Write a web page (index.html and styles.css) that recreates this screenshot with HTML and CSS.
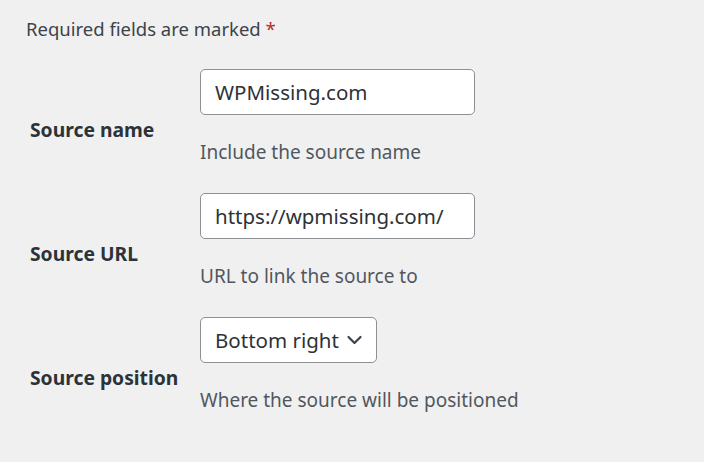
FILE: index.html
```html
<!DOCTYPE html>
<html lang="en">
<head>
<meta charset="utf-8">
<title>Source settings</title>
<link rel="stylesheet" href="styles.css">
</head>
<body>
<div class="page">
  <p class="required">Required fields are marked <span class="star">*</span></p>
  <div class="form">
    <div class="row">
      <label class="label" for="sn">Source name</label>
      <div class="field">
        <input class="input" id="sn" type="text" value="WPMissing.com">
        <p class="desc">Include the source name</p>
      </div>
    </div>
    <div class="row">
      <label class="label" for="su">Source URL</label>
      <div class="field">
        <input class="input" id="su" type="text" value="https://wpmissing.com/">
        <p class="desc">URL to link the source to</p>
      </div>
    </div>
    <div class="row">
      <label class="label" for="sp">Source position</label>
      <div class="field">
        <div class="select" id="sp">
          <span class="select-text">Bottom right</span>
          <svg class="chev" width="20" height="20" viewBox="0 0 20 20"><path d="M3.5 7 L9.5 13 L15.5 7" fill="none" stroke="#3c434a" stroke-width="2.2" stroke-linecap="round" stroke-linejoin="round"/></svg>
        </div>
        <p class="desc">Where the source will be positioned</p>
      </div>
    </div>
  </div>
</div>
</body>
</html>
```
FILE: styles.css
```css
html, body {
  margin: 0;
  padding: 0;
  background: #f0f0f1;
}
body {
  font-family: "Noto Sans", "Open Sans", sans-serif;
  color: #3c434a;
  width: 704px;
  height: 462px;
  overflow: hidden;
}
.page {
  padding: 16px 0 0 26px;
}
.required {
  margin: 0;
  font-size: 18.5px;
  line-height: 26px;
}
.star {
  color: #b32d2e;
}
.form {
  margin-top: 27px;
  display: flex;
  flex-direction: column;
  gap: 28px;
}
.row {
  display: grid;
  grid-template-columns: 174px 1fr;
  align-items: start;
}
.label {
  margin-top: 48px;
  padding-left: 4px;
  font-weight: 700;
  font-size: 19.3px;
  line-height: 26px;
  color: #2c3338;
  white-space: nowrap;
}
.field {
  display: flex;
  flex-direction: column;
  align-items: flex-start;
}
.input, .select {
  box-sizing: border-box;
  height: 46px;
  border: 1px solid #8c8f94;
  border-radius: 5px;
  background: #fff;
  font-family: inherit;
  font-size: 20.5px;
  color: #2c3338;
  padding: 0 14px;
}
.input {
  width: 275px;
  outline: none;
}
.select {
  display: flex;
  align-items: center;
  gap: 6px;
  width: 177px;
  padding-right: 8px;
  white-space: nowrap;
}
.select-text {
  white-space: nowrap;
}
.chev {
  flex: none;
}
.desc {
  margin: 24px 0 0;
  font-size: 19px;
  line-height: 26px;
  color: #50575e;
}
```
